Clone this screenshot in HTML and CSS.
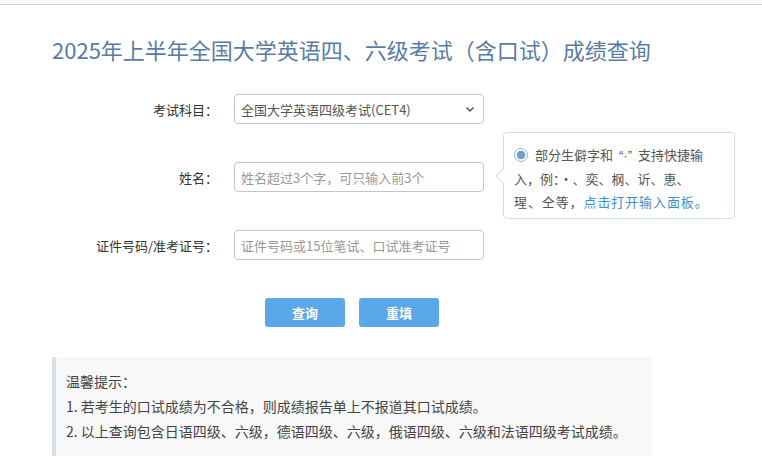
FILE: index.html
```html
<!DOCTYPE html>
<html lang="zh-CN">
<head>
<meta charset="utf-8">
<title>成绩查询</title>
<link rel="stylesheet" href="styles.css">
</head>
<body>
<div class="topbar"></div>
<main class="page">
  <h1 class="title">2025年上半年全国大学英语四、六级考试（含口试）成绩查询</h1>
  <form class="form">
    <div class="row">
      <label class="label">考试科目：</label>
      <div class="field">
        <div class="select">
          <span>全国大学英语四级考试(CET4)</span>
          <svg class="caret" width="10" height="7" viewBox="0 0 10 7"><path d="M1.5 1.5 L5 5 L8.5 1.5" fill="none" stroke="#555" stroke-width="1.5"/></svg>
        </div>
      </div>
    </div>
    <div class="row">
      <label class="label">姓名：</label>
      <div class="field">
        <div class="input">姓名超过3个字，可只输入前3个</div>
        <div class="tip">
          <span class="tip-arrow"></span>
          <p class="tip-line"><span class="radio"></span>部分生僻字和<span class="latin">“·”</span>支持快捷输</p>
          <p class="tip-line">入，例：·、奕、㭎、䜣、恵、</p>
          <p class="tip-line tip-last">瑆、仝等，<a class="link">点击打开输入面板。</a></p>
        </div>
      </div>
    </div>
    <div class="row">
      <label class="label">证件号码/准考证号：</label>
      <div class="field">
        <div class="input">证件号码或15位笔试、口试准考证号</div>
      </div>
    </div>
    <div class="buttons">
      <button type="button" class="btn">查询</button>
      <button type="button" class="btn">重填</button>
    </div>
  </form>
  <section class="notice">
    <p>温馨提示：</p>
    <p>1. 若考生的口试成绩为不合格，则成绩报告单上不报道其口试成绩。</p>
    <p>2. 以上查询包含日语四级、六级，德语四级、六级，俄语四级、六级和法语四级考试成绩。</p>
  </section>
</main>
</body>
</html>
```
FILE: styles.css
```css
* { box-sizing: border-box; }
html, body { margin: 0; padding: 0; background: #fff; }
body {
  font-family: "Microsoft YaHei", "Noto Sans CJK SC", "Noto Sans", sans-serif;
  color: #333;
  font-size: 13px;
  overflow: hidden;
}
.topbar {
  height: 5px;
  border-bottom: 1px solid #d9d9d9;
  background: #fafafa;
}
.page {
  padding-left: 52px;
  width: 710px;
}
.title {
  margin: 28px 0 0 0;
  font-size: 22px;
  font-weight: normal;
  line-height: 32px;
  color: #587ca6;
}
.form {
  margin-top: 29px;
}
.row {
  display: grid;
  grid-template-columns: 166px 250px;
  column-gap: 16px;
  align-items: center;
  height: 30px;
  margin-bottom: 38px;
}
.label {
  text-align: right;
  color: #333;
  font-size: 13px;
}
.field {
  position: relative;
  height: 30px;
}
.select, .input {
  height: 30px;
  border: 1px solid #c4c4c4;
  border-radius: 4px;
  padding: 0 6px;
  display: flex;
  align-items: center;
  font-size: 13px;
  color: #999;
}
.select {
  justify-content: space-between;
  color: #555;
  padding-right: 8px;
}
.caret { display: block; }
.tip {
  position: absolute;
  left: 269px;
  top: -30px;
  width: 232px;
  height: 87px;
  border: 1px solid #cfe0ec;
  border-radius: 4px;
  background: #fff;
  padding: 10px 8px 0 10px;
}
.tip-arrow {
  position: absolute;
  left: -6px;
  top: 37px;
  width: 12px;
  height: 12px;
  background: #fff;
  border-left: 1px solid #cfe0ec;
  border-bottom: 1px solid #cfe0ec;
  transform: rotate(45deg);
}
.tip-line {
  position: relative;
  margin: 0;
  font-size: 13px;
  line-height: 23.5px;
  height: 23.5px;
  color: #555;
  white-space: nowrap;
}
.tip-last { letter-spacing: 0.9px; }
.latin {
  font-family: "Liberation Sans", sans-serif;
  display: inline-block;
  padding: 0 6px;
}
.radio {
  display: inline-block;
  width: 14px;
  height: 14px;
  border: 1px solid #8fb6d8;
  border-radius: 50%;
  margin-right: 7px;
  vertical-align: -2px;
  background: radial-gradient(circle, #6e9ccb 0 4px, #fff 4.5px);
}
.link { color: #3d8fcc; }
.buttons {
  display: flex;
  gap: 14px;
  padding-left: 213px;
}
.btn {
  width: 80px;
  height: 29px;
  border: none;
  border-radius: 3px;
  background: #5aa8e8;
  color: #fff;
  font-family: inherit;
  font-size: 13px;
  font-weight: bold;
  padding: 0;
}
.notice {
  margin-top: 30px;
  width: 600px;
  background: #f8f8f8;
  border-left: 4px solid #d3e0eb;
  padding: 12px 10px 12px 10px;
}
.notice p {
  margin: 0;
  font-size: 14px;
  line-height: 25px;
  color: #444;
}
```
